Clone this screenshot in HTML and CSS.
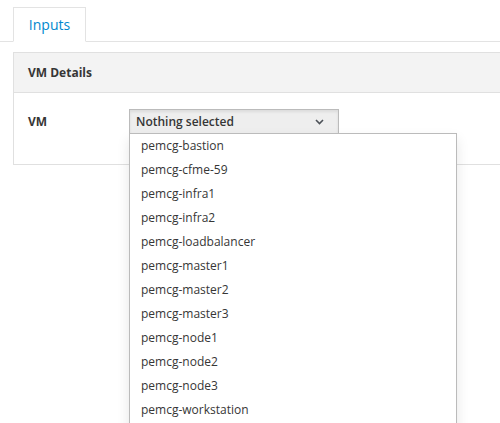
FILE: index.html
```html
<!DOCTYPE html>
<html>
<head>
<meta charset="utf-8">
<link rel="stylesheet" href="styles.css">
</head>
<body>
<div class="tabs">
  <div class="tab">Inputs</div>
</div>
<div class="panel">
  <div class="panel-heading">VM Details</div>
  <div class="panel-body">
    <div class="label">VM</div>
    <div class="select-wrap">
      <div class="select-btn">
        <span>Nothing selected</span>
        <svg class="caret" width="9" height="6" viewBox="0 0 9 6"><path d="M1 1 L4.5 4.5 L8 1" fill="none" stroke="#4d5258" stroke-width="1.6"/></svg>
      </div>
      <ul class="menu">
        <li>pemcg-bastion</li>
        <li>pemcg-cfme-59</li>
        <li>pemcg-infra1</li>
        <li>pemcg-infra2</li>
        <li>pemcg-loadbalancer</li>
        <li>pemcg-master1</li>
        <li>pemcg-master2</li>
        <li>pemcg-master3</li>
        <li>pemcg-node1</li>
        <li>pemcg-node2</li>
        <li>pemcg-node3</li>
        <li>pemcg-workstation</li>
      </ul>
    </div>
  </div>
</div>
</body>
</html>
```

FILE: styles.css
```css
html, body {
  margin: 0;
  padding: 0;
  background: #fff;
  font-family: "Open Sans", "Liberation Sans", sans-serif;
  color: #363636;
  font-size: 12px;
  overflow: hidden;
  height: 423px;
}

.tabs {
  display: flex;
  padding: 7px 0 0 13px;
  border-bottom: 1px solid #e3e3e3;
}

.tab {
  width: 71px;
  height: 33px;
  margin-bottom: -1px;
  border: 1px solid #e3e3e3;
  border-bottom: 1px solid #fff;
  background: #fff;
  color: #0088ce;
  font-size: 14px;
  line-height: 33px;
  text-align: center;
}

.panel {
  margin: 10px 0 0 13px;
  border: 1px solid #e0e0e0;
  border-right: none;
}

.panel-heading {
  background: #f3f3f3;
  border-bottom: 1px solid #e0e0e0;
  height: 39px;
  padding-left: 14px;
  font-weight: 700;
  font-size: 12px;
  line-height: 40px;
  color: #363636;
}

.panel-body {
  display: flex;
  align-items: flex-start;
  height: 71px;
  padding: 16px 0 0 14px;
  box-sizing: border-box;
}

.label {
  width: 101px;
  font-weight: 700;
  line-height: 25px;
}

.select-wrap {
  position: relative;
}

.select-btn {
  height: 23px;
  width: 188px;
  border: 1px solid #bbb;
  background: #eeeeee;
  box-shadow: inset 0 2px 3px rgba(0,0,0,0.08);
  display: flex;
  align-items: center;
  justify-content: space-between;
  padding: 0 14px 0 6px;
  font-weight: 600;
  color: #363636;
}

.caret {
  display: block;
}

.menu {
  position: absolute;
  left: 0;
  top: 24px;
  width: 326px;
  margin: 0;
  padding: 0 0 20px;
  list-style: none;
  background: #fff;
  border: 1px solid #bbb;
  box-shadow: 0 6px 12px rgba(0,0,0,0.1);
}

.menu li {
  height: 24px;
  line-height: 24px;
  padding-left: 11px;
  color: #363636;
  font-size: 12px;
}
```
